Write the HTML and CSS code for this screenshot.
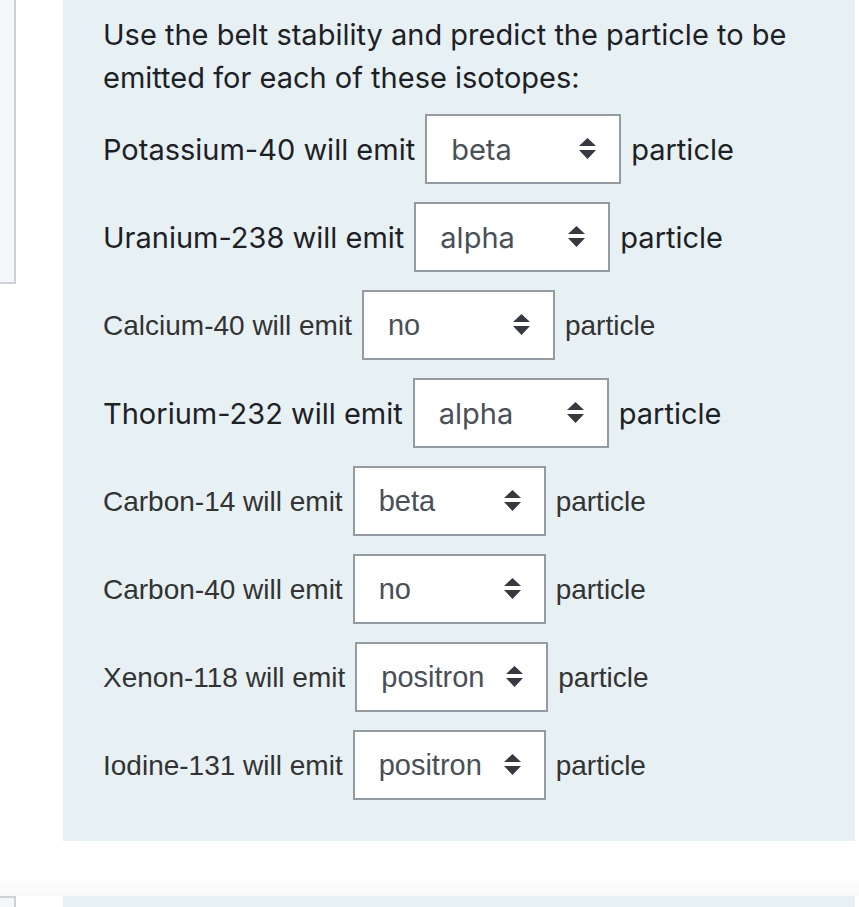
FILE: index.html
```html
<!DOCTYPE html>
<html lang="en">
<head>
<meta charset="utf-8">
<title>Question</title>
<link rel="stylesheet" href="styles.css">
</head>
<body>
<div class="page">
  <div class="que">
    <aside class="info"></aside>
    <section class="formulation">
      <p class="qtext">Use the belt stability and predict the particle to be emitted for each of these isotopes:</p>

      <div class="row sf">
        <span class="label">Potassium-40 will emit</span>
        <span class="sel wide"><select><option>beta</option><option>alpha</option><option>positron</option><option>no</option></select><svg class="arrow" viewBox="0 0 17 21"><path d="M8.5 0 L17 8 L0 8 Z M0 12 L17 12 L8.5 21 Z"/></svg></span>
        <span class="label">particle</span>
      </div>

      <div class="row sf">
        <span class="label">Uranium-238 will emit</span>
        <span class="sel wide"><select><option>alpha</option><option>beta</option><option>positron</option><option>no</option></select><svg class="arrow" viewBox="0 0 17 21"><path d="M8.5 0 L17 8 L0 8 Z M0 12 L17 12 L8.5 21 Z"/></svg></span>
        <span class="label">particle</span>
      </div>

      <div class="row hv">
        <span class="label">Calcium-40 will emit</span>
        <span class="sel"><select><option>no</option><option>alpha</option><option>beta</option><option>positron</option></select><svg class="arrow" viewBox="0 0 17 21"><path d="M8.5 0 L17 8 L0 8 Z M0 12 L17 12 L8.5 21 Z"/></svg></span>
        <span class="label">particle</span>
      </div>

      <div class="row sf">
        <span class="label">Thorium-232 will emit</span>
        <span class="sel wide"><select><option>alpha</option><option>beta</option><option>positron</option><option>no</option></select><svg class="arrow" viewBox="0 0 17 21"><path d="M8.5 0 L17 8 L0 8 Z M0 12 L17 12 L8.5 21 Z"/></svg></span>
        <span class="label">particle</span>
      </div>

      <div class="row hv">
        <span class="label">Carbon-14 will emit</span>
        <span class="sel"><select><option>beta</option><option>alpha</option><option>positron</option><option>no</option></select><svg class="arrow" viewBox="0 0 17 21"><path d="M8.5 0 L17 8 L0 8 Z M0 12 L17 12 L8.5 21 Z"/></svg></span>
        <span class="label">particle</span>
      </div>

      <div class="row hv">
        <span class="label">Carbon-40 will emit</span>
        <span class="sel"><select><option>no</option><option>alpha</option><option>beta</option><option>positron</option></select><svg class="arrow" viewBox="0 0 17 21"><path d="M8.5 0 L17 8 L0 8 Z M0 12 L17 12 L8.5 21 Z"/></svg></span>
        <span class="label">particle</span>
      </div>

      <div class="row hv">
        <span class="label">Xenon-118 will emit</span>
        <span class="sel"><select><option>positron</option><option>alpha</option><option>beta</option><option>no</option></select><svg class="arrow" viewBox="0 0 17 21"><path d="M8.5 0 L17 8 L0 8 Z M0 12 L17 12 L8.5 21 Z"/></svg></span>
        <span class="label">particle</span>
      </div>

      <div class="row hv">
        <span class="label">Iodine-131 will emit</span>
        <span class="sel"><select><option>positron</option><option>alpha</option><option>beta</option><option>no</option></select><svg class="arrow" viewBox="0 0 17 21"><path d="M8.5 0 L17 8 L0 8 Z M0 12 L17 12 L8.5 21 Z"/></svg></span>
        <span class="label">particle</span>
      </div>
    </section>
  </div>
  <div class="gap"></div>
  <div class="band"></div>
  <div class="que next">
    <aside class="info"></aside>
    <section class="formulation"></section>
  </div>
</div>
</body>
</html>
```

FILE: styles.css
```css
html, body {
  margin: 0;
  padding: 0;
  background: #ffffff;
}

.page {
  width: 859px;
  height: 907px;
  overflow: hidden;
}

.que {
  display: flex;
  align-items: flex-start;
  gap: 47px;
}

.info {
  width: 14px;
  height: 282px;
  background: #f6f7f9;
  border-right: 2px solid #ced2d8;
  border-bottom: 2px solid #ced2d8;
  flex: none;
}

.formulation {
  width: 792px;
  box-sizing: border-box;
  background: #e7f1f4;
  padding: 13px 40px 41px 40px;
  color: #1d2125;
}

.qtext {
  margin: 0 0 15px 0;
  font-family: "Inter", "Liberation Sans", sans-serif;
  font-size: 29px;
  line-height: 43px;
}

.row {
  display: flex;
  align-items: baseline;
  gap: 10px;
  margin-bottom: 18px;
}

.row:last-child {
  margin-bottom: 0;
}

.row.sf {
  font-family: "Inter", "Liberation Sans", sans-serif;
  font-size: 29px;
  color: #1d2125;
}

.row.hv {
  font-family: "Liberation Sans", Arial, sans-serif;
  font-size: 28px;
  color: #333333;
}

.row.hv .sel select {
  font-size: 29px;
}

.sel {
  position: relative;
  display: inline-flex;
  width: 193px;
  flex: none;
}

.sel.wide {
  width: 196px;
}

.sel select {
  -webkit-appearance: none;
  appearance: none;
  width: 100%;
  height: 70px;
  box-sizing: border-box;
  margin: 0;
  padding: 0 40px 0 24px;
  border: 2px solid #959ba3;
  border-radius: 0;
  background: #ffffff;
  color: #495057;
  font: inherit;
  outline: none;
}

.sel .arrow {
  position: absolute;
  right: 25px;
  top: 24px;
  width: 17px;
  height: 21px;
  fill: #343a40;
  pointer-events: none;
}

.gap {
  height: 40px;
}

.band {
  height: 15px;
  background: linear-gradient(#fdfdfd, #f8f8f8);
}

.que.next .info {
  height: 40px;
  border-top: 2px solid #ced2d8;
  border-bottom: none;
}

.que.next .formulation {
  height: 40px;
  padding: 0;
}
```
